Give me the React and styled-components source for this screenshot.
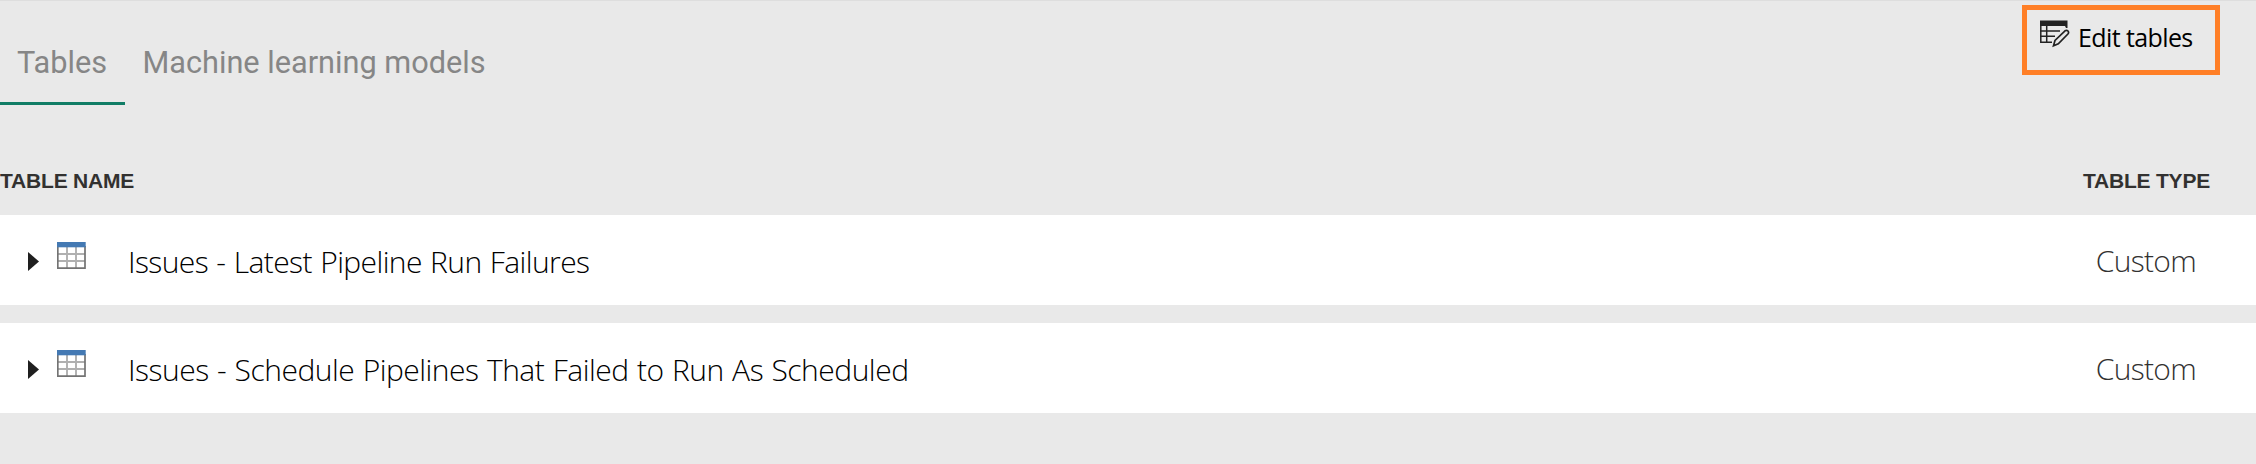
import React from 'react';
import styled, { createGlobalStyle } from 'styled-components';

const GlobalStyle = createGlobalStyle`
  body { margin: 0; background: #e9e9e9; }
  * { box-sizing: border-box; }
`;

const Page = styled.main`
  height: 464px;
  overflow: hidden;
  border-top: 1px solid #dedede;
  background: #e9e9e9;
  font-family: 'Open Sans', 'Noto Sans', sans-serif;
`;

const TopBar = styled.header`
  display: flex;
  justify-content: space-between;
  align-items: flex-start;
  height: 104px;
`;

const Tabs = styled.nav`
  display: flex;
  height: 104px;
`;

const Tab = styled.div`
  width: ${(p) => p.$width}px;
  padding: 43px 0 0 ${(p) => p.$indent}px;
  border-bottom: 3px solid ${(p) => (p.$active ? '#117d66' : 'transparent')};
  font: 400 30.7px/38px Roboto, sans-serif;
  color: #868686;
  white-space: nowrap;
`;

const EditButton = styled.button`
  display: flex;
  align-items: flex-start;
  width: 198px;
  height: 70px;
  margin: 4px 36px 0 0;
  padding: 10px 0 0 13px;
  border: 5px solid #ff7f27;
  background: transparent;
  color: #000;
`;

const EditLabel = styled.span`
  margin: 0 0 0 8px;
  font: 400 25px/34px 'Open Sans', sans-serif;
  letter-spacing: -0.6px;
  white-space: nowrap;
`;

const HeaderRow = styled.div`
  display: flex;
  justify-content: space-between;
  height: 110px;
  padding: 64px 46px 0 0;
  font: 700 21px/24px 'Liberation Sans', Arial, sans-serif;
  color: #323130;
`;

const HeaderCell = styled.span`
  letter-spacing: -0.2px;
`;

const Rows = styled.div`
  display: flex;
  flex-direction: column;
  gap: 18px;
`;

const Row = styled.div`
  display: flex;
  align-items: flex-start;
  height: 90px;
  padding: 0 60px 0 28px;
  background: #fff;
`;

const Expander = styled.svg`
  width: 11px;
  height: 20px;
  margin-top: 37px;
`;

const TableGlyph = styled.svg`
  width: 29px;
  height: 28px;
  margin: 27px 0 0 18px;
`;

const Name = styled.span`
  margin: 26px auto 0 42px;
  font-size: 30px;
  font-weight: 340;
  line-height: 42px;
  letter-spacing: ${(p) => p.$spacing || 0}px;
  word-spacing: 1.1px;
  color: #000;
  white-space: nowrap;
`;

const Type = styled.span`
  margin-top: 25px;
  font-size: 30px;
  font-weight: 320;
  line-height: 42px;
  letter-spacing: -0.7px;
  color: #323130;
`;

const EditTableIcon = () => (
  <svg width="30" height="28" viewBox="0 0 30 28" fill="none" stroke="#222" strokeWidth="1.5">
    <path d="M0 .5H27.5V8H26L25 6H0Z" fill="#222" stroke="none" />
    <path d="M.8 5V22.2H12M6.7 6V22M0 11H20M0 16.2H15" />
    <path d="M13.5 25.8L15 20.4L25 10.8Q26.7 9.7 28 11Q29.2 12.4 27.9 14L18.3 23.8Z" fill="#e9e9e9" strokeWidth="1.7" />
  </svg>
);

const TableIcon = () => (
  <TableGlyph viewBox="0 0 29 28" fill="none">
    <path d="M10 5V26M19 5V26M1 12H28M1 19H28" stroke="#b0b0b0" strokeWidth="1.9" />
    <path d="M.8 4V26.2H28V4" stroke="#737373" strokeWidth="1.7" />
    <path d="M0 0H28.7V5.3H0Z" fill="#4479b3" />
  </TableGlyph>
);

const tables = [
  { name: 'Issues - Latest Pipeline Run Failures', type: 'Custom', spacing: -0.6 },
  { name: 'Issues - Schedule Pipelines That Failed to Run As Scheduled', type: 'Custom', spacing: -0.5 },
];

export default function App() {
  return (
    <Page>
      <GlobalStyle />
      <TopBar>
        <Tabs>
          <Tab $active $width={125} $indent={17}>Tables</Tab>
          <Tab $width={380} $indent={17.5}>Machine learning models</Tab>
        </Tabs>
        <EditButton>
          <EditTableIcon />
          <EditLabel>Edit tables</EditLabel>
        </EditButton>
      </TopBar>
      <HeaderRow>
        <HeaderCell>TABLE NAME</HeaderCell>
        <HeaderCell>TABLE TYPE</HeaderCell>
      </HeaderRow>
      <Rows>
        {tables.map((t) => (
          <Row key={t.name}>
            <Expander viewBox="0 0 11 20"><path d="M0 0L11 9.5L0 19Z" fill="#1f1f1f" /></Expander>
            <TableIcon />
            <Name $spacing={t.spacing}>{t.name}</Name>
            <Type>{t.type}</Type>
          </Row>
        ))}
      </Rows>
    </Page>
  );
}
